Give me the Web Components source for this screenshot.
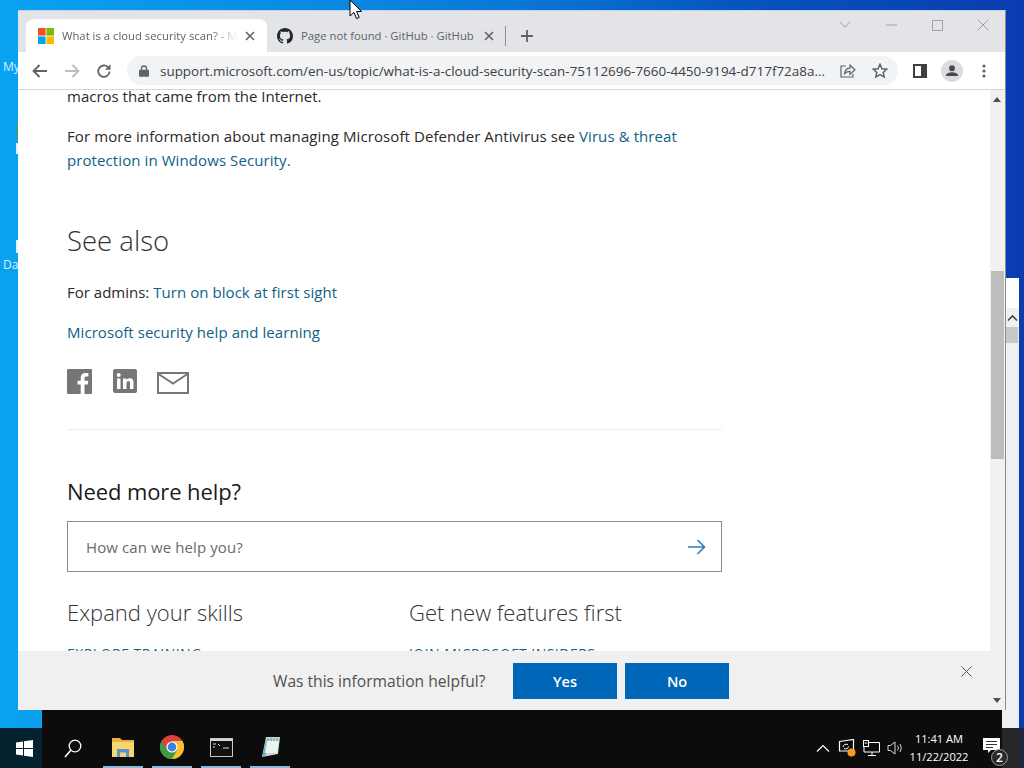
<!DOCTYPE html>
<html>
<head>
<meta charset="utf-8">
<title>What is a cloud security scan?</title>
<style>
  html, body { margin: 0; padding: 0; background: #0a3cb0; }
  body { width: 1024px; height: 768px; overflow: hidden; font-family: "Open Sans", "Liberation Sans", sans-serif; }
  article-page a { color: #0f6285; }
</style>
</head>
<body>
<desk-top>
  <browser-window slot="window">
    <tab-strip slot="tabs"></tab-strip>
    <tool-bar slot="toolbar" url="support.microsoft.com/en-us/topic/what-is-a-cloud-security-scan-75112696-7660-4450-9194-d717f72a8a..."></tool-bar>
    <article-page slot="page">
      <p>macros that came from the Internet.</p>
      <p class="gap">For more information about managing Microsoft Defender Antivirus see <a>Virus &amp; threat protection in Windows Security.</a></p>
    </article-page>
  </browser-window>
</desk-top>

<script>
class ShadowBase extends HTMLElement {
    connectedCallback() {
        if (!this.shadowRoot) {
            this.attachShadow({ mode: 'open' });
            this.shadowRoot.innerHTML = this.render();
        }
    }
}

class DeskTop extends ShadowBase {
    render() {
        return `
      <style>
        :host { display: block; position: relative; width: 1024px; height: 768px; overflow: hidden;
          background: linear-gradient(90deg, #0aa2f0 0, #0a8fe6 25%, #0a78d8 50%, #0654c0 72%, #0a3cb0 100%); }
        .label { position: absolute; left: 3px; color: #d8f0ff; font: 12px "Open Sans", sans-serif; }
        .back { position: absolute; left: 42px; top: 650px; width: 960px; height: 78px; background: #0c0c0c; }
        .side { position: absolute; left: 1002px; top: 278px; width: 17px; height: 450px; background: #f0f0f2; }
        .side i { position: absolute; left: 4px; top: 0; width: 13px; height: 30px; background: #fff; }
        .side b { position: absolute; left: 4px; top: 49px; width: 12px; height: 16px; background: #c8c8c8; }
        .side svg { position: absolute; left: 5px; top: 36px; }
        .sliver { position: absolute; left: 16px; width: 2px; background: #e4f2fb; }
        task-bar { position: absolute; left: 0; right: 0; bottom: 0; }
        .cursor { position: absolute; left: 349px; top: 0; }
      </style>
      <span class="label" style="top:58px">My</span>
      <span class="label" style="top:256px">Da</span>
      <span class="sliver" style="top:123px;height:17px;background:#2f9f8f"></span>
      <span class="sliver" style="top:143px;height:11px"></span>
      <span class="sliver" style="top:240px;height:13px"></span>
      <div class="back"></div>
      <div class="side"><i></i><svg width="11" height="8" viewBox="0 0 11 8"><path d="M1 6.500l4.500-4.500 4.500 4.500" fill="none" stroke="#444" stroke-width="1.600"/></svg><b></b></div>
      <slot name="window"></slot>
      <task-bar></task-bar>
      <svg class="cursor" width="13" height="20" viewBox="0 0 13 20"><path d="M1 0v16l4-3.600 2.600 6.200 2.600-1.100-2.600-6h5z" fill="#fff" stroke="#000"/></svg>
    `;
    }
}

class BrowserWindow extends ShadowBase {
    render() {
        return `
      <style>
        :host { display: flex; flex-direction: column; position: absolute; left: 18px; top: 10px; width: 988px; height: 700px;
          box-sizing: border-box; background: #fff; border-top: 1px solid #c5d3e8; border-right: 1px solid #8a8a8a; overflow: hidden; }
        .body { flex: 1; min-height: 0; display: flex; }
        .main { flex: 1; min-width: 0; display: flex; flex-direction: column; }
      </style>
      <slot name="tabs"></slot>
      <slot name="toolbar"></slot>
      <div class="body">
        <div class="main">
          <slot name="page"></slot>
          <feedback-bar></feedback-bar>
        </div>
        <scroll-bar></scroll-bar>
      </div>
    `;
    }
}

class TabStrip extends ShadowBase {
    render() {
        return `
      <style>
        :host { display: flex; align-items: flex-end; height: 41px; background: #e3e4e8; padding-left: 8px; position: relative;
          font: 11.300px/16px "Open Sans", sans-serif; color: #5f6368; }
        .tab { display: flex; align-items: center; height: 33px; box-sizing: border-box; width: 241px; flex: none; }
        .active { background: #fff; border-radius: 8px 8px 0 0; padding: 0 12px 0 12px; }
        .other { padding: 0 0 0 10px; width: 238px; }
        .title { flex: 1; min-width: 0; white-space: nowrap; overflow: hidden; margin-left: 8px; }
        .active .title { -webkit-mask-image: linear-gradient(90deg, #000 85%, transparent 100%); mask-image: linear-gradient(90deg, #000 85%, transparent 100%); }
        .other .title { flex: none; width: 176px; }
        .x { margin-left: 7px; flex: none; }
        .sep { width: 1px; height: 20px; background: #8f9196; align-self: center; margin-top: 8px; flex: none; }
        .plus { margin-left: 14px; align-self: center; margin-top: 8px; flex: none; }
        .win { margin-left: auto; margin-right: -1px; align-self: flex-start; display: flex; }
        .win span { width: 46px; height: 28px; display: flex; align-items: center; justify-content: center; }
      </style>
      <div class="tab active">
        <svg width="16" height="16" viewBox="0 0 16 16"><rect width="7.600" height="7.600" fill="#f25022"/><rect x="8.400" width="7.600" height="7.600" fill="#7fba00"/><rect y="8.400" width="7.600" height="7.600" fill="#00a4ef"/><rect x="8.400" y="8.400" width="7.600" height="7.600" fill="#ffb900"/></svg>
        <span class="title">What is a cloud security scan? - M</span>
        <svg class="x" width="10" height="10" viewBox="0 0 10 10"><path d="M1 1l8 8M9 1l-8 8" stroke="#5f6368" stroke-width="1.600"/></svg>
      </div>
      <div class="tab other">
        <svg width="16" height="16" viewBox="0 0 16 16"><path fill="#24292f" d="M8 0C3.580 0 0 3.580 0 8c0 3.540 2.290 6.530 5.470 7.590.4.070.55-.17.55-.38 0-.19-.01-.82-.01-1.490-2.010.37-2.530-.49-2.690-.94-.09-.23-.48-.94-.82-1.130-.28-.15-.68-.52-.01-.53.63-.01 1.080.58 1.230.82.72 1.210 1.870.87 2.330.66.070-.52.28-.87.51-1.070-1.780-.2-3.640-.89-3.640-3.950 0-.87.31-1.590.82-2.150-.08-.2-.36-1.020.08-2.120 0 0 .67-.21 2.200.82.64-.18 1.320-.27 2-.27.68 0 1.360.09 2 .27 1.530-1.040 2.200-.82 2.200-.82.44 1.100.16 1.920.08 2.120.51.56.82 1.270.82 2.150 0 3.070-1.870 3.750-3.650 3.950.29.25.54.73.54 1.480 0 1.070-.01 1.930-.01 2.200 0 .21.15.46.55.38A8.013 8.013 0 0016 8c0-4.420-3.580-8-8-8z"/></svg>
        <span class="title">Page not found · GitHub · GitHub</span>
        <svg class="x" width="10" height="10" viewBox="0 0 10 10"><path d="M1 1l8 8M9 1l-8 8" stroke="#5f6368" stroke-width="1.600"/></svg>
      </div>
      <div class="sep"></div>
      <svg class="plus" width="14" height="14" viewBox="0 0 14 14"><path d="M7 1v12M1 7h12" stroke="#5f6368" stroke-width="1.800"/></svg>
      <div class="win">
        <span><svg width="12" height="8" viewBox="0 0 12 8"><path d="M1 1l5 5 5-5" fill="none" stroke="#b4b6ba" stroke-width="1.200"/></svg></span>
        <span><svg width="11" height="2" viewBox="0 0 11 2"><path d="M0 1h11" stroke="#a2a2a6"/></svg></span>
        <span><svg width="11" height="11" viewBox="0 0 11 11"><rect x=".5" y=".5" width="10" height="10" fill="none" stroke="#a2a2a6"/></svg></span>
        <span><svg width="12" height="12" viewBox="0 0 12 12"><path d="M.5.5l11 11M11.500.5l-11 11" stroke="#a2a2a6"/></svg></span>
      </div>
    `;
    }
}

class ToolBar extends ShadowBase {
    render() {
        return `
      <style>
        :host { display: flex; align-items: center; height: 38px; box-sizing: border-box; background: #fff; border-bottom: 1px solid #d6d6d6; flex: none; }
        .btn { width: 32px; flex: none; display: flex; justify-content: center; align-items: center; }
        .nav { padding-left: 6px; display: flex; }
        .omni { margin-left: 7px; width: 771px; height: 29px; flex: none; box-sizing: border-box; background: #f1f3f4; border-radius: 15px;
          display: flex; align-items: center; padding-left: 12px; font: 13.450px/18px "Open Sans", sans-serif; color: #3c4043; }
        .url { margin-left: 11px; white-space: nowrap; width: 672px; overflow: hidden; flex: none; }
        .right { display: flex; margin-left: 6px; }
      </style>
      <div class="nav">
        <div class="btn"><svg width="16" height="14" viewBox="0 0 16 14"><path d="M15 7H2M7.500 1L1.600 7l5.900 6" fill="none" stroke="#5f6368" stroke-width="1.900"/></svg></div>
        <div class="btn"><svg width="16" height="14" viewBox="0 0 16 14"><path d="M1 7h13M8.500 1l5.900 6-5.900 6" fill="none" stroke="#bcbec2" stroke-width="1.900"/></svg></div>
        <div class="btn"><svg width="16" height="16" viewBox="0 0 16 16"><path d="M13.600 8.500a5.700 5.700 0 1 1-1.600-4.300" fill="none" stroke="#5f6368" stroke-width="1.800"/><path d="M14.500 1.200v5.600H9z" fill="#5f6368"/></svg></div>
      </div>
      <div class="omni">
        <svg width="10" height="12" viewBox="0 0 10 12"><path d="M2.500 5V3.500a2.500 2.500 0 0 1 5 0V5" fill="none" stroke="#5f6368" stroke-width="1.300"/><rect y="4.800" width="10" height="7" rx="1" fill="#5f6368"/></svg>
        <span class="url">${this.getAttribute('url')}</span>
        <div class="btn"><svg width="16" height="15" viewBox="0 0 16 15"><path d="M6 3H1v11h12v-3" fill="none" stroke="#5f6368" stroke-width="1.200"/><path d="M4.500 10.500C5 7 7.500 5.200 10 5.200V2.200l5 4.600-5 4.600V8.400c-2.200 0-4 .6-5.500 2.100z" fill="none" stroke="#5f6368" stroke-width="1.200"/></svg></div>
        <div class="btn"><svg width="16" height="15" viewBox="0 0 16 15"><path d="M8 1.300l2 4.400 4.700.5-3.500 3.200 1 4.700L8 11.700l-4.200 2.400 1-4.700L1.300 6.200 6 5.700z" fill="none" stroke="#5f6368" stroke-width="1.500"/></svg></div>
      </div>
      <div class="right">
        <div class="btn"><svg width="14" height="14" viewBox="0 0 14 14"><rect x="1" y="1" width="12" height="12" fill="none" stroke="#3c4043" stroke-width="2"/><rect x="8" y="1" width="5" height="12" fill="#3c4043"/></svg></div>
        <div class="btn"><svg width="22" height="22" viewBox="0 0 22 22"><circle cx="11" cy="11" r="11" fill="#dadce0"/><circle cx="11" cy="8.200" r="3" fill="#47494d"/><path d="M5 15.500c0-2.200 3.500-3.200 6-3.200s6 1 6 3.200V16H5z" fill="#47494d"/></svg></div>
        <div class="btn"><svg width="4" height="14" viewBox="0 0 4 14"><circle cx="2" cy="2" r="1.600" fill="#5f6368"/><circle cx="2" cy="7" r="1.600" fill="#5f6368"/><circle cx="2" cy="12" r="1.600" fill="#5f6368"/></svg></div>
      </div>
    `;
    }
}

class ArticlePage extends ShadowBase {
    render() {
        return `
      <style>
        :host { display: block; flex: 1; min-height: 0; overflow: hidden; background: #fff; padding: 0 0 0 49px;
          font: 15px/24px "Open Sans", sans-serif; color: #2a2a2a; }
        .wrap { width: 655px; margin-top: -6px; }
        ::slotted(p) { margin: 0; width: 640px; }
        ::slotted(p.gap) { margin-top: 16px; letter-spacing: .09px; }
        a { color: #0f6285; letter-spacing: .06px; }
        h2 { font-weight: 300; font-size: 27.500px; line-height: 36px; margin: 51px 0 0; color: #333; }
        .line { margin: 21px 0 0; }
        .line + .line { margin-top: 16px; }
        .social { display: flex; align-items: center; margin-top: 24px; height: 26px; }
        .social svg:nth-child(2) { margin: 0 20px 0 21px; }
        .social svg:nth-child(3) { margin-top: 3px; }
        hr { border: 0; height: 1px; background: #ececec; margin: 35px 0 0; }
        h3 { font-weight: 400; font-size: 22px; letter-spacing: -.1px; line-height: 32px; margin: 45px 0 0; color: #1a1a1a; }
        .search { display: flex; align-items: center; justify-content: space-between; box-sizing: border-box; height: 51px; margin-top: 14px;
          border: 1px solid #8c8c8c; padding: 0 15px 0 18px; color: #6a6a6a; letter-spacing: .1px; }
        .cols { display: flex; margin-top: 23px; }
        .cols div { width: 342px; flex: none; }
        h4 { font-weight: 300; font-size: 22px; line-height: 34px; margin: 0; color: #333; }
        .cols a { display: block; margin-top: 13px; font-size: 14px; letter-spacing: .5px; }
      </style>
      <div class="wrap">
        <slot></slot>
        <h2>See also</h2>
        <p class="line">For admins: <a>Turn on block at first sight</a></p>
        <p class="line"><a>Microsoft security help and learning</a></p>
        <div class="social">
          <svg width="25" height="25" viewBox="0 0 25 25"><path fill="#767676" d="M1 0h23a1 1 0 0 1 1 1v23a1 1 0 0 1-1 1h-6.500v-9.500h3.200l.5-3.800h-3.700V9.300c0-1.100.3-1.800 1.900-1.800h2V4.100c-.4 0-1.500-.1-2.900-.1-2.900 0-4.800 1.700-4.800 4.900v2.800h-3.200v3.800h3.200V25H1a1 1 0 0 1-1-1V1a1 1 0 0 1 1-1z"/></svg>
          <svg width="24" height="24" viewBox="0 0 24 24"><path fill="#767676" fill-rule="evenodd" d="M2 0h20a2 2 0 0 1 2 2v20a2 2 0 0 1-2 2H2a2 2 0 0 1-2-2V2a2 2 0 0 1 2-2zM4 9.500V20h3.500V9.500zM5.700 4a2 2 0 1 0 0 4 2 2 0 0 0 0-4zM10 9.500V20h3.500v-5.500c0-1.500.4-2.600 1.900-2.600s1.600 1.300 1.600 2.700V20H20.500v-6.200c0-2.900-.8-4.600-3.800-4.600-1.600 0-2.600.8-3.200 1.700V9.500z"/></svg>
          <svg width="32" height="22" viewBox="0 0 32 22"><rect x="1" y="1" width="30" height="20" fill="#fff" stroke="#767676" stroke-width="2"/><path d="M1.500 2L16 11.500 30.500 2" fill="none" stroke="#767676" stroke-width="2"/></svg>
        </div>
        <hr>
        <h3>Need more help?</h3>
        <div class="search">
          <span>How can we help you?</span>
          <svg width="18" height="16" viewBox="0 0 18 16"><path d="M0 8h16M9.500 1l7 7-7 7" fill="none" stroke="#2f7fb8" stroke-width="1.600"/></svg>
        </div>
        <div class="cols">
          <div><h4>Expand your skills</h4><a>EXPLORE TRAINING</a></div>
          <div><h4>Get new features first</h4><a>JOIN MICROSOFT INSIDERS</a></div>
        </div>
      </div>
    `;
    }
}

class FeedbackBar extends ShadowBase {
    render() {
        return `
      <style>
        :host { display: flex; align-items: flex-start; flex: none; height: 59px; box-sizing: border-box; background: #f0f0f0; padding: 12px 0 0 255px; }
        span { font: 15.600px/36px "Open Sans", sans-serif; color: #505050; width: 240px; white-space: nowrap; }
        button { width: 104px; height: 36px; border: 0; background: #0067b8; color: #fff; margin: 0 8px 0 0; padding: 0; font: 600 14.500px "Open Sans", sans-serif; }
        svg { margin: 3px 0 0 224px; }
      </style>
      <span>Was this information helpful?</span>
      <button>Yes</button><button>No</button>
      <svg width="11" height="11" viewBox="0 0 11 11"><path d="M.5.5l10 10M10.500.5l-10 10" stroke="#555"/></svg>
    `;
    }
}

class ScrollBar extends ShadowBase {
    render() {
        return `
      <style>
        :host { display: block; position: relative; width: 15px; flex: none; background: #f1f1f1; }
        .thumb { position: absolute; left: 1px; right: 1px; top: 181px; height: 188px; background: #bdbdbd; }
        .up, .down { position: absolute; left: 3px; width: 0; height: 0; border-left: 4.500px solid transparent; border-right: 4.500px solid transparent; }
        .up { top: 7px; border-bottom: 5px solid #505050; }
        .down { bottom: 7px; border-top: 5px solid #505050; }
      </style>
      <div class="up"></div><div class="thumb"></div><div class="down"></div>
    `;
    }
}

class TaskBar extends ShadowBase {
    render() {
        return `
      <style>
        :host { display: flex; align-items: center; height: 40px; background: #0c0c0c; color: #fff; font: 12px/18px "Open Sans", sans-serif; }
        .start { width: 42px; height: 40px; box-sizing: border-box; padding-left: 6px; flex: none; display: flex; align-items: center; justify-content: center; background: #04222f; }
        .search { width: 61px; flex: none; display: flex; justify-content: center; }
        .app { width: 40px; margin-right: 9px; height: 40px; flex: none; box-sizing: border-box; display: flex; align-items: center; justify-content: center; border-bottom: 2px solid #8cb8dc; }
        .tray { margin-left: auto; display: flex; align-items: center; height: 40px; }
        .tray svg { flex: none; }
        .clock { text-align: center; width: 70px; margin-left: 1px; font-size: 11.100px; }
        .note { position: relative; width: 28px; height: 40px; box-sizing: border-box; padding-right: 2px; display: flex; align-items: center; justify-content: flex-end; }
        .note > svg { margin-top: -6px; }
        .edge { width: 22px; height: 40px; background: linear-gradient(90deg, #272727 0, #272727 77%, #1c2a3e 78%); }
        .badge { position: absolute; left: 17px; top: 21px; width: 15px; height: 15px; border-radius: 50%; border: 1px solid #9a9a9a; background: #2a2a2a; font-size: 12px; font-weight: 600; line-height: 15px; text-align: center; z-index: 1; }
      </style>
      <div class="start"><svg width="17" height="17" viewBox="0 0 17 17"><path fill="#fff" d="M0 2.400l7-1V8H0zM8 1.200L17 0v8H8zM0 9h7v6.600l-7-1zM8 9h9v8l-9-1.200z"/></svg></div>
      <div class="search"><svg width="18" height="19" viewBox="0 0 18 19"><circle cx="11" cy="7" r="5.800" fill="none" stroke="#fff" stroke-width="1.300"/><path d="M6.800 11.300L1 18" stroke="#fff" stroke-width="1.600"/></svg></div>
      <div class="app"><svg width="22" height="20" viewBox="0 0 22 20"><path fill="#e8b23e" d="M0 1h8l2 2h12v17H0z"/><path fill="#f6d673" d="M0 5h22v15H0z"/><path fill="#5a93cc" d="M5 12h12v8h-3v-4.500H8V20H5z"/></svg></div>
      <div class="app"><svg width="24" height="24" viewBox="0 0 24 24"><circle cx="12" cy="12" r="12" fill="#db4437"/><path d="M12 24a12 12 0 0 0 10.400-18H12z" fill="#fbc02d"/><path d="M1.600 6A12 12 0 0 0 12 24l5.200-9H7z" fill="#3d9b46"/><circle cx="12" cy="12" r="5.600" fill="#fff"/><circle cx="12" cy="12" r="4.400" fill="#3f7fe0"/></svg></div>
      <div class="app"><svg width="23" height="19" viewBox="0 0 23 19"><rect x=".5" y=".5" width="22" height="18" fill="#111" stroke="#c8c8c8"/><rect x="1" y="1" width="21" height="2" fill="#d8d8d8"/><path d="M3 6h3M3 9h2M8 6l2 2M13 10h6" stroke="#ddd"/></svg></div>
      <div class="app"><svg width="22" height="22" viewBox="0 0 22 22"><path fill="#c7d8dc" d="M7 1h14l-2 17-16 3z"/><path fill="#6fb0c4" d="M3 21L7 5l2-1-2 15z"/><path fill="#e8f4ee" d="M8 5h12l-2 12H6z"/><path d="M9 2v3M12 2v3M15 2v3M18 2v3" stroke="#5d8f9f"/></svg></div>
      <div class="tray">
        <svg width="14" height="8" viewBox="0 0 14 8" style="margin-right:8px"><path d="M1 7.500l6-6 6 6" fill="none" stroke="#fff" stroke-width="1.200"/></svg>
        <svg width="18" height="18" viewBox="0 0 18 18" style="margin-right:7px"><path d="M1.500 2.500l14-2v11.500h-14z" fill="none" stroke="#fff" stroke-width="1.200"/><path d="M5 8c0-2 2.500-3.500 5-2.500M10.500 7.500c0 2-2.500 3-4.500 2" fill="none" stroke="#fff"/><circle cx="13.500" cy="13.500" r="4" fill="#f59a23"/></svg>
        <svg width="17" height="16" viewBox="0 0 17 16" style="margin-right:7px"><path d="M5.500 2.500h11v9.500h-15.500V7M9 12v3.500M5 15.500h8" fill="none" stroke="#fff"/><rect x=".5" y=".5" width="5" height="6" fill="#0c0c0c" stroke="#fff"/><path d="M1.500 3h3" stroke="#fff"/></svg>
        <svg width="16" height="14" viewBox="0 0 16 14"><path d="M1 4.500h2.500L8 1v12L3.500 9.500H1zM10.500 4.500c1 1.500 1 3.500 0 5M13 3c1.500 2.500 1.500 5.500 0 8" fill="none" stroke="#d8d8d8"/></svg>
        <div class="clock">11:41 AM<br>11/22/2022</div>
        <div class="note">
          <svg width="17" height="15" viewBox="0 0 17 15"><path fill="#fff" d="M0 0h17v12H8l-3 3v-3H0z"/><path d="M3 3.500h11M3 6.500h11M3 9.500h7" stroke="#333"/></svg>
          <span class="badge">2</span>
        </div>
        <div class="edge"></div>
      </div>
    `;
    }
}

customElements.define('desk-top', DeskTop);
customElements.define('browser-window', BrowserWindow);
customElements.define('tab-strip', TabStrip);
customElements.define('tool-bar', ToolBar);
customElements.define('article-page', ArticlePage);
customElements.define('feedback-bar', FeedbackBar);
customElements.define('scroll-bar', ScrollBar);
customElements.define('task-bar', TaskBar);
</script>
</body>
</html>
